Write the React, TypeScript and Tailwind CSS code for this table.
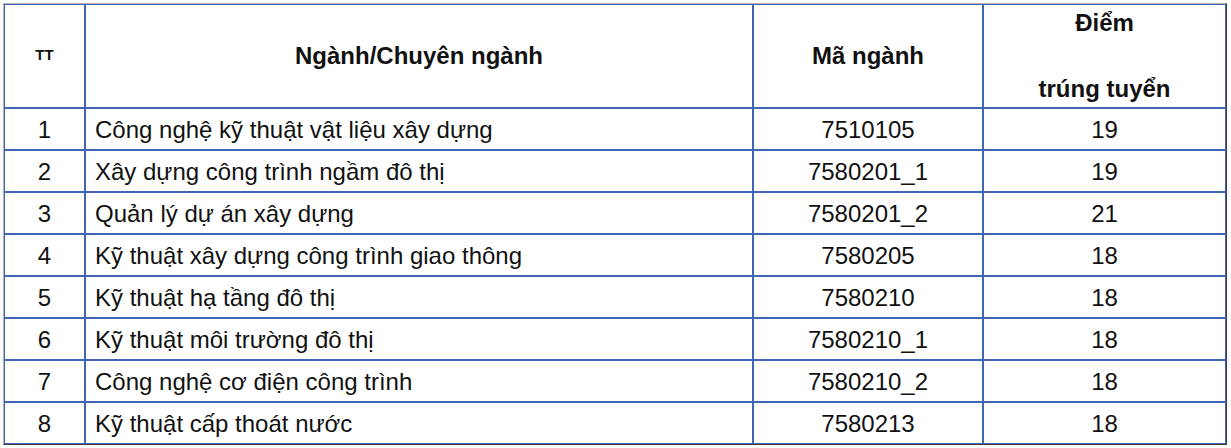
import React from "react";

const rows = [
  ["1", "Công nghệ kỹ thuật vật liệu xây dựng", "7510105", "19"],
  ["2", "Xây dựng công trình ngầm đô thị", "7580201_1", "19"],
  ["3", "Quản lý dự án xây dựng", "7580201_2", "21"],
  ["4", "Kỹ thuật xây dựng công trình giao thông", "7580205", "18"],
  ["5", "Kỹ thuật hạ tầng đô thị", "7580210", "18"],
  ["6", "Kỹ thuật môi trường đô thị", "7580210_1", "18"],
  ["7", "Công nghệ cơ điện công trình", "7580210_2", "18"],
  ["8", "Kỹ thuật cấp thoát nước", "7580213", "18"],
];

const cell = "border border-[#4165b6] flex items-center";

export default function App() {
  return (
    <div className="w-[1231px] h-[448px] bg-white p-[3px] text-[#111]" style={{ fontFamily: '"Liberation Sans", Arial, sans-serif' }}>
      <div className="w-[1224px] border-t border-l border-t-[#b4b4b4] border-l-[#b4b4b4] border-b border-r border-b-[#3c3c3c] border-r-[#3c3c3c] grid grid-cols-[81px_668px_230px_243px] grid-rows-[104px_repeat(8,42px)]">
        <div className={`${cell} justify-center font-bold text-[15px] pb-[2px]`}>TT</div>
        <div className={`${cell} justify-center font-bold text-[24px]`}>Ngành/Chuyên ngành</div>
        <div className={`${cell} justify-center font-bold text-[24px]`}>Mã ngành</div>
        <div className={`${cell} flex-col justify-between pt-[3px] pb-[3px] font-bold text-[24px]`}>
          <div className="leading-[30px]">Điểm</div>
          <div className="leading-[30px]">trúng tuyển</div>
        </div>
        {rows.map((r) => (
          <React.Fragment key={r[0]}>
            <div className={`${cell} justify-center pt-[2px] text-[24px]`}>{r[0]}</div>
            <div className={`${cell} pl-[9px] pt-[2px] text-[24px]`}>{r[1]}</div>
            <div className={`${cell} justify-center pt-[2px] text-[24px]`}>{r[2]}</div>
            <div className={`${cell} justify-center pt-[2px] text-[24px]`}>{r[3]}</div>
          </React.Fragment>
        ))}
      </div>
    </div>
  );
}
